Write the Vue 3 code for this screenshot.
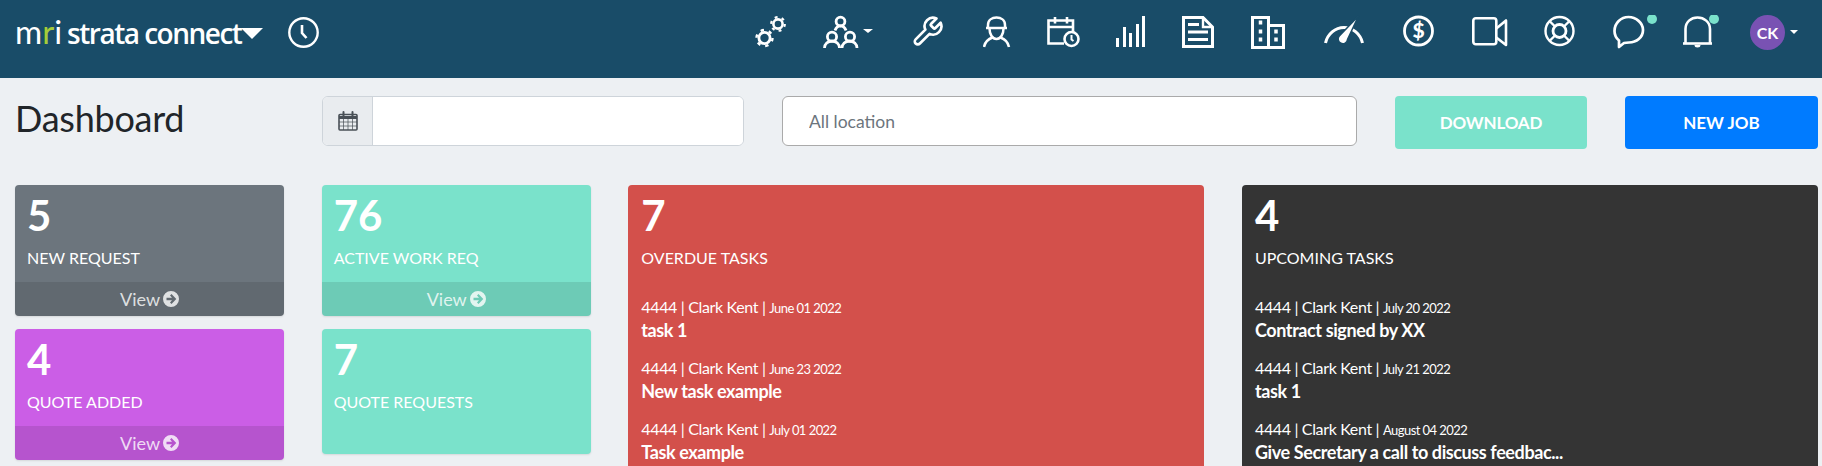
<template>
  <div class="page">
    <header class="topnav">
      <div class="logo">
        <span class="logo-mri">m<span class="logo-r">r</span>i</span>
        <span class="logo-name">strata connect</span>
        <span class="logo-caret"></span>
      </div>
      <svg class="clock" width="31" height="31" viewBox="0 0 31 31" fill="none" stroke="#fff">
        <circle cx="15.5" cy="15.5" r="14.2" stroke-width="2.4" />
        <path d="M14 8v8l4.5 5" stroke-width="2.6" />
      </svg>

      <nav class="icons">
        <svg width="68" height="34" viewBox="0 0 68 34" fill="none" stroke="#fff">
          <circle cx="9.5" cy="23" r="5.6" stroke-width="2.8" />
          <circle cx="9.5" cy="23" r="8" stroke-width="2.4" stroke-dasharray="3.4 4.98" />
          <circle cx="23" cy="9" r="4.6" stroke-width="2.6" />
          <circle cx="23" cy="9" r="6.8" stroke-width="2.2" stroke-dasharray="2.9 4.22" />
        </svg>
        <svg width="89" height="34" viewBox="0 0 89 34" fill="none" stroke="#fff" stroke-width="2.8">
          <circle cx="17.5" cy="6.5" r="4.4" />
          <circle cx="9" cy="21.7" r="4.6" />
          <circle cx="27" cy="21.7" r="4.6" />
          <path d="M1.5 33a7.5 7 0 0 1 15 0M19 33a7.5 7 0 0 1 15 0M12 15.5c1-3 3-4.5 5.5-4.7 2.5.2 4.5 1.700 5.500 4.700" />
          <path d="M40 14h10l-5 4z" fill="#fff" stroke="none" />
        </svg>
        <svg width="71" height="34" viewBox="0 0 71 34" fill="none" stroke="#fff" stroke-linejoin="round">
          <path transform="translate(-1.4 0) scale(1.4)" stroke-width="1.9" d="M14.7 6.3a1 1 0 0 0 0 1.4l1.6 1.6a1 1 0 0 0 1.4 0l3.77-3.77a6 6 0 0 1-7.94 7.94l-6.91 6.91a2.12 2.12 0 0 1-3-3l6.91-6.91a6 6 0 0 1 7.94-7.94l-3.76 3.76z" />
        </svg>
        <svg width="64" height="34" viewBox="0 0 64 34" fill="none" stroke="#fff" stroke-width="2.5">
          <path d="M5 13V10C5 5 9 2.5 13.5 2.5S22 5 22 10v3" />
          <path d="M3 13h21" />
          <path d="M6.5 13.5c0 6 3 10.500 7 10.500s7-4.500 7-10.500" />
          <path d="M1 32c1-5 4.5-8 8.500-9.500M26 32c-1-5-4.500-8-8.500-9.500" />
        </svg>
        <svg width="69" height="34" viewBox="0 0 69 34" fill="none" stroke="#fff" stroke-width="2.6">
          <path d="M17 28.5H1.5V5.5h24.5v11" />
          <path d="M1.5 12h24.5M8 2v6.500M20 2v6.500" />
          <circle cx="24.5" cy="24" r="7" />
          <path d="M24.5 20v4.500l2 1.500" stroke-width="2" />
        </svg>
        <svg width="66" height="34" viewBox="0 0 66 34" fill="#fff">
          <rect x="0" y="23" width="3" height="9" />
          <rect x="7" y="12" width="3" height="20" />
          <rect x="13" y="18" width="3" height="14" />
          <rect x="20" y="9" width="3" height="23" />
          <rect x="26" y="1" width="3" height="31" />
        </svg>
        <svg width="69" height="34" viewBox="0 0 69 34" fill="none" stroke="#fff" stroke-width="3">
          <path d="M1.5 2.500H21L30.500 12V31.500H1.500z" />
          <path d="M21 2.500V12h9.500" stroke-width="2.4" />
          <path d="M6 9.500h11M6 17h20M6 24.500h20" />
        </svg>
        <svg width="73" height="34" viewBox="0 0 73 34" fill="none" stroke="#fff" stroke-width="3">
          <path d="M1.500 32.500V2.500h16v30zM17.500 10.500h15v22h-15" />
          <path d="M9.500 5.500v4M9.500 14.500v4M9.500 22.500v4M25 14.500v4M25 22.500v4" stroke-width="3.5" />
        </svg>
        <svg width="79" height="34" viewBox="0 0 79 34" fill="none" stroke="#fff">
          <path d="M1.500 28a19 20 0 0 1 37 0" stroke-width="3" />
          <path d="M34.500 1 L23.500 24.500a4.700 4.700 0 1 1-8.200-3.600z" fill="#fff" stroke="#194c68" stroke-width="1.5" />
        </svg>
        <svg width="69" height="34" viewBox="0 0 69 34" fill="none" stroke="#fff">
          <circle cx="15.5" cy="16" r="14" stroke-width="2.8" />
          <text x="15.5" y="23" text-anchor="middle" class="dollar">$</text>
        </svg>
        <svg width="72" height="34" viewBox="0 0 72 34" fill="none" stroke="#fff" stroke-width="2.6" stroke-linejoin="round">
          <rect x="1.3" y="3.3" width="23" height="26" rx="2.5" />
          <path d="M24.300 13.500L34 5.500V30l-9.700-7.500" />
        </svg>
        <svg width="69" height="34" viewBox="0 0 69 34" fill="none" stroke="#fff">
          <circle cx="15.5" cy="16" r="14" stroke-width="2.4" />
          <circle cx="15.5" cy="16" r="6.5" stroke-width="2.8" />
          <path d="M6 6.500l5 5M25 6.500l-5 5M6 25.500l5-5M25 25.500l-5-5" stroke-width="2.4" />
        </svg>
        <svg width="70" height="34" viewBox="0 0 70 34" fill="none" stroke="#fff">
          <path d="M6 25.500C3 23 1.500 19.500 1.500 16 1.500 8 8 2 15.500 2S30 8 30 15c0 7.500-6.500 12.500-14 12.500-1.500 0-3 0-5 .5l-5 4z" stroke-width="2.7" stroke-linejoin="round" />
          <circle cx="39" cy="4" r="5" fill="#7ae2cb" stroke="none" />
        </svg>
        <svg width="67" height="34" viewBox="0 0 67 34" fill="none" stroke="#fff">
          <path d="M2.500 28V14C2.500 7 8 2.500 14.500 2.500S27 7 27 14v14" stroke-width="2.6" />
          <path d="M0 28.500h29" stroke-width="2.6" />
          <path d="M11.500 30h6a3 2.500 0 0 1-6 0z" fill="#fff" stroke="none" />
          <circle cx="31" cy="4" r="5" fill="#7ae2cb" stroke="none" />
        </svg>
        <div class="avatar">CK</div>
        <span class="avatar-caret"></span>
      </nav>
    </header>

    <main class="content">
      <section class="toolbar">
        <h1 class="title">Dashboard</h1>
        <div class="date-field">
          <span class="date-addon">
            <svg width="20" height="20" viewBox="0 0 20 20" fill="none" stroke="#495057">
              <rect x="1" y="3.5" width="18" height="15.5" rx="1" stroke-width="1.6" />
              <path d="M1 6.500h18" stroke-width="3" />
              <path d="M5.500 7v12M10 7v12M14.500 7v12M1 11h18M1 15h18" stroke-width="1" opacity=".7" />
              <path d="M5.500 1v4M14.500 1v4" stroke-width="2" stroke-linecap="round" />
            </svg>
          </span>
          <input class="date-input" type="text" />
        </div>
        <input class="location" type="text" placeholder="All location" />
        <button class="btn btn-teal">DOWNLOAD</button>
        <button class="btn btn-blue">NEW JOB</button>
      </section>

      <section class="board">
        <div v-for="col in tileColumns" :key="col[0].label" class="tile-col">
          <div v-for="tile in col" :key="tile.label" class="tile" :class="tile.tone">
            <div class="tile-body">
              <div class="count">{{ tile.count }}</div>
              <div class="label">{{ tile.label }}</div>
            </div>
            <a v-if="tile.view" class="tile-foot">
              View
              <svg width="16" height="16" viewBox="0 0 16 16" fill="currentColor">
                <path fill-rule="evenodd" d="M8 0a8 8 0 1 0 0 16A8 8 0 1 0 8 0ZM8.500 3L13.300 8L8.500 13L7 11.500L9 9.300H3.500V6.700H9L7 4.500Z" />
              </svg>
            </a>
          </div>
        </div>

        <div v-for="panel in panels" :key="panel.label" class="panel" :class="panel.tone">
          <div class="count">{{ panel.count }}</div>
          <div class="label">{{ panel.label }}</div>
          <ul class="tasks">
            <li v-for="task in panel.tasks" :key="task.date">
              <div class="meta">4444 | Clark Kent | <small>{{ task.date }}</small></div>
              <div class="task-title">{{ task.title }}</div>
            </li>
          </ul>
        </div>
      </section>
    </main>
  </div>
</template>

<script setup>
const tileColumns = [
  [
    { count: 5, label: 'NEW REQUEST', tone: 'grey', view: true },
    { count: 4, label: 'QUOTE ADDED', tone: 'purple', view: true }
  ],
  [
    { count: 76, label: 'ACTIVE WORK REQ', tone: 'teal', view: true },
    { count: 7, label: 'QUOTE REQUESTS', tone: 'teal', view: false }
  ]
]

const panels = [
  {
    count: 7,
    label: 'OVERDUE TASKS',
    tone: 'red',
    tasks: [
      { date: 'June 01 2022', title: 'task 1' },
      { date: 'June 23 2022', title: 'New task example' },
      { date: 'July 01 2022', title: 'Task example' }
    ]
  },
  {
    count: 4,
    label: 'UPCOMING TASKS',
    tone: 'dark',
    tasks: [
      { date: 'July 20 2022', title: 'Contract signed by XX' },
      { date: 'July 21 2022', title: 'task 1' },
      { date: 'August 04 2022', title: 'Give Secretary a call to discuss feedbac...' }
    ]
  }
]
</script>

<style>
html,
body {
  margin: 0;
  height: 466px;
  overflow: hidden;
  background: #edf0f3;
}
</style>

<style scoped>
.page {
  font-family: Lato, "Liberation Sans", sans-serif;
  color: #212529;
}

.topnav {
  display: flex;
  align-items: center;
  box-sizing: border-box;
  height: 78px;
  padding: 0 24px 14px 15px;
  background: #194c68;
}

.logo {
  display: flex;
  align-items: baseline;
  color: #fff;
  line-height: 34px;
}

.logo-mri {
  font-family: Lato, sans-serif;
  font-size: 33px;
  font-weight: 400;
  margin-right: 5px;
}

.logo-r {
  color: #a4cd39;
}

.logo-name {
  font-family: "Open Sans", sans-serif;
  font-size: 28px;
  font-weight: 600;
  letter-spacing: -1.5px;
}

.logo-caret {
  align-self: center;
  width: 0;
  height: 0;
  margin-top: 2px;
  border-left: 11px solid transparent;
  border-right: 11px solid transparent;
  border-top: 11px solid #fff;
}

.clock {
  margin-left: 25px;
}

.icons {
  display: flex;
  align-items: center;
  margin-left: auto;
}

.icons svg {
  flex: none;
}

.dollar {
  font-family: Lato, sans-serif;
  font-size: 21px;
  font-weight: 900;
  fill: #fff;
  stroke: none;
}

.avatar {
  width: 35px;
  height: 35px;
  border-radius: 50%;
  background: #7952b3;
  color: #fff;
  font-size: 16px;
  font-weight: 700;
  line-height: 35px;
  text-align: center;
}

.avatar-caret {
  width: 0;
  height: 0;
  margin-left: 5px;
  border-left: 4px solid transparent;
  border-right: 4px solid transparent;
  border-top: 4px solid #fff;
}

.content {
  padding: 18px 4px 0 15px;
}

.toolbar {
  display: grid;
  grid-template-columns: 269px 422px 575px 192px 193px;
  column-gap: 38px;
  align-items: start;
  height: 53px;
  margin-bottom: 36px;
}

.title {
  margin: 0;
  font-size: 36px;
  font-weight: 400;
  letter-spacing: -0.25px;
  line-height: 44px;
}

.date-field {
  display: flex;
  box-sizing: border-box;
  height: 50px;
  border: 1px solid #ced4da;
  border-radius: 6px;
  overflow: hidden;
  background: #fff;
}

.date-addon {
  display: flex;
  align-items: center;
  justify-content: center;
  width: 49px;
  background: #e9ecef;
  border-right: 1px solid #ced4da;
}

.date-input {
  flex: 1;
  min-width: 0;
  border: 0;
  outline: 0;
}

.location {
  box-sizing: border-box;
  width: 100%;
  height: 50px;
  padding: 0 14px 0 26px;
  border: 1px solid #aaa;
  border-radius: 6px;
  background: #fff;
  font-family: inherit;
  font-size: 17.5px;
  outline: 0;
}

.location::placeholder {
  color: #6c757d;
}

.btn {
  height: 53px;
  border: 0;
  border-radius: 4px;
  color: #fff;
  font-family: inherit;
  font-size: 17px;
  font-weight: 700;
}

.btn-teal {
  background: #7ae2cb;
  letter-spacing: -0.2px;
}

.btn-blue {
  background: #007bff;
}

.board {
  display: grid;
  grid-template-columns: 269px 269px 576px 576px;
  column-gap: 37.67px;
  align-items: start;
}

.tile-col {
  display: flex;
  flex-direction: column;
  gap: 13px;
}

.tile {
  display: flex;
  flex-direction: column;
  border-radius: 4px;
  overflow: hidden;
  color: #fff;
  box-shadow: 0 1px 2px rgba(0, 0, 0, 0.1);
}

.tile-body {
  box-sizing: border-box;
  height: 97px;
  padding: 9px 12px 0;
}

.tile:last-child:not(:has(.tile-foot)) {
  height: 125px;
}

.tile-foot {
  display: flex;
  align-items: center;
  justify-content: center;
  gap: 3px;
  height: 34px;
  background: rgba(0, 0, 0, 0.1);
  color: rgba(255, 255, 255, 0.8);
  font-size: 18px;
}

.grey {
  background: #6c757d;
}

.purple {
  background: #cb5ee6;
}

.teal {
  background: #7ae2cb;
}

.red {
  background: #d3504b;
}

.dark {
  background: #343434;
}

.count {
  font-size: 42px;
  font-weight: 700;
  line-height: 42px;
}

.label {
  margin-top: 10px;
  font-size: 16px;
  line-height: 24px;
}

.panel {
  box-sizing: border-box;
  height: 340px;
  padding: 9px 13px 0;
  border-radius: 4px;
  color: #fff;
}

.tasks {
  margin: 25px 0 0;
  padding: 0;
  list-style: none;
}

.tasks li {
  margin-bottom: 15px;
}

.meta {
  font-size: 16px;
  letter-spacing: -0.35px;
  line-height: 24px;
}

.meta small {
  font-size: 13px;
  letter-spacing: -0.55px;
  line-height: 1;
}

.task-title {
  font-size: 18px;
  font-weight: 700;
  letter-spacing: -0.4px;
  line-height: 22px;
}
</style>
